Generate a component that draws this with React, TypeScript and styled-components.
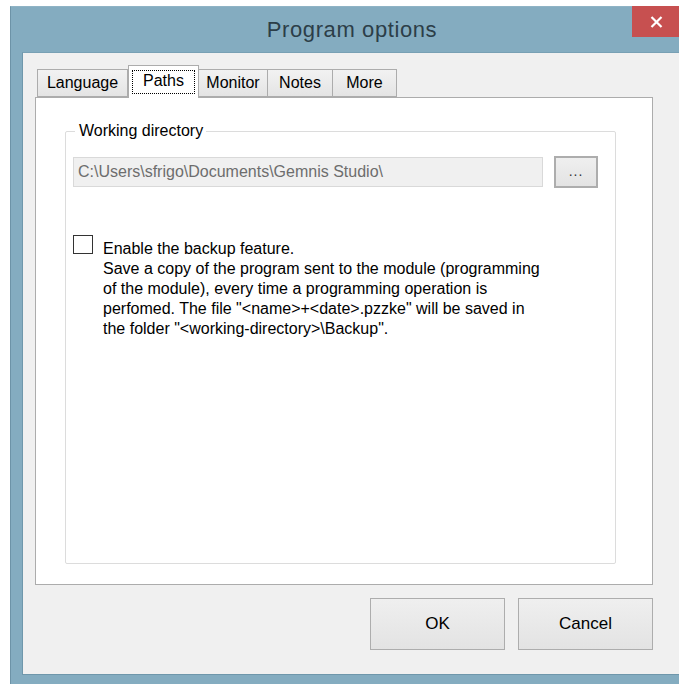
import React from 'react';
import styled, { createGlobalStyle } from 'styled-components';

const GlobalStyle = createGlobalStyle`
  html, body {
    margin: 0;
    padding: 0;
    background: #ffffff;
    overflow: hidden;
  }
  body {
    font-family: 'Liberation Sans', Arial, sans-serif;
  }
`;

const Window = styled.div`
  margin: 6px 0 0 10px;
  width: 700px;
  height: 690px;
  background: #84acc0;
  border-left: 1px solid #6d93a7;
  border-top: 1px solid #8fb3c5;
  display: flex;
  flex-direction: column;
`;

const TitleBar = styled.div`
  height: 45px;
  display: flex;
  align-items: flex-start;
  position: relative;
`;

const Title = styled.div`
  flex: 1;
  text-align: center;
  padding-top: 10px;
  padding-right: 18px;
  font-size: 22px;
  color: #2c3e48;
  letter-spacing: 0.6px;
`;

const CloseButton = styled.div`
  position: absolute;
  top: -1px;
  left: 621px;
  width: 60px;
  height: 31px;
  background: #c75050;
  display: flex;
  align-items: center;
  justify-content: center;
  padding-right: 12px;
  box-sizing: border-box;
`;

const Client = styled.div`
  margin-left: 11px;
  height: 623px;
  background: #f0f0f0;
  border-top: 1px solid #78a0b4;
  border-left: 1px solid #6f97ab;
  border-bottom: 1px solid #6f97ab;
  padding: 12px 0 0 12px;
  box-sizing: border-box;
  display: flex;
  flex-direction: column;
`;

const TabControl = styled.div`
  width: 618px;
  display: flex;
  flex-direction: column;
`;

const TabStrip = styled.div`
  display: flex;
  align-items: flex-end;
  height: 32px;
  padding-left: 2px;
  position: relative;
  z-index: 1;
`;

const Tab = styled.div<{ $active?: boolean; $width: number }>`
  box-sizing: border-box;
  width: ${p => p.$width}px;
  height: ${p => (p.$active ? '33px' : '28px')};
  margin-bottom: ${p => (p.$active ? '-1px' : '0')};
  padding-top: ${p => (p.$active ? '4px' : '4px')};
  border: 1px solid #acacac;
  border-bottom: ${p => (p.$active ? 'none' : '1px solid #acacac')};
  border-left: ${p => (p.$active ? '1px solid #acacac' : 'none')};
  background: ${p =>
    p.$active ? '#ffffff' : 'linear-gradient(#f2f2f2, #e4e4e4)'};
  font-size: 16px;
  color: #000;
  text-align: center;
  white-space: nowrap;
  position: relative;
  z-index: ${p => (p.$active ? 2 : 1)};

  &:first-child {
    border-left: 1px solid #acacac;
  }
`;

const FocusLabel = styled.span`
  display: block;
  margin: 0 3px;
  height: 24px;
  box-sizing: border-box;
  padding-top: 1px;
  border: 1px dotted #000;
`;

const TabPage = styled.div`
  height: 488px;
  background: #ffffff;
  border: 1px solid #acacac;
  box-sizing: border-box;
  padding: 24px 36px 20px 29px;
  display: flex;
`;

const GroupBox = styled.fieldset`
  flex: 1;
  margin: 0;
  border: 1px solid #dcdcdc;
  border-radius: 2px;
  padding: 16px 0 0 7px;
  display: flex;
  flex-direction: column;
`;

const Legend = styled.legend`
  margin-left: 2px;
  padding: 0 3px 0 4px;
  font-size: 16px;
  color: #000;
  line-height: 18px;
`;

const PathRow = styled.div`
  display: flex;
  align-items: center;
  gap: 11px;
`;

const PathField = styled.div`
  width: 470px;
  height: 30px;
  box-sizing: border-box;
  background: #f0f0f0;
  border: 1px solid #d9d9d9;
  padding: 5px 0 0 4px;
  font-size: 16px;
  color: #6d6d6d;
  white-space: nowrap;
  overflow: hidden;
`;

const BrowseButton = styled.div`
  width: 44px;
  height: 32px;
  box-sizing: border-box;
  border: 2px solid #adadad;
  background: linear-gradient(#efefef, #e3e3e3);
  display: flex;
  align-items: flex-end;
  justify-content: center;
  padding-bottom: 7px;
  font-size: 14px;
  color: #333;
  letter-spacing: 1px;
`;

const OptionRow = styled.div`
  display: flex;
  align-items: flex-start;
  gap: 10px;
  margin-top: 47px;
`;

const CheckBox = styled.div`
  width: 20px;
  height: 19px;
  box-sizing: border-box;
  border: 1px solid #333333;
  background: #ffffff;
  flex-shrink: 0;
`;

const OptionText = styled.div`
  font-size: 16px;
  line-height: 20px;
  color: #000;
  margin-top: 4px;
`;

const ButtonBar = styled.div`
  width: 618px;
  display: flex;
  justify-content: flex-end;
  gap: 13px;
  margin-top: 13px;
`;

const DialogButton = styled.div`
  width: 135px;
  height: 52px;
  box-sizing: border-box;
  border: 1px solid #adadad;
  background: linear-gradient(#efefef, #e3e3e3);
  display: flex;
  align-items: center;
  justify-content: center;
  font-size: 17px;
  color: #000;
`;

const tabs = [
  { label: 'Language', width: 91 },
  { label: 'Paths', width: 71 },
  { label: 'Monitor', width: 69 },
  { label: 'Notes', width: 65 },
  { label: 'More', width: 64 },
];

export default function App() {
  return (
    <>
      <GlobalStyle />
      <Window>
        <TitleBar>
          <Title>Program options</Title>
          <CloseButton>
            <svg width="13" height="12" viewBox="0 0 13 12">
              <path d="M1.5 1 L11.5 11 M11.5 1 L1.5 11" stroke="#ffffff" strokeWidth="2.2" />
            </svg>
          </CloseButton>
        </TitleBar>
        <Client>
          <TabControl>
            <TabStrip>
              {tabs.map(t => {
                const active = t.label === 'Paths';
                return (
                  <Tab key={t.label} $active={active} $width={t.width}>
                    {active ? <FocusLabel>{t.label}</FocusLabel> : t.label}
                  </Tab>
                );
              })}
            </TabStrip>
            <TabPage>
              <GroupBox>
                <Legend>Working directory</Legend>
                <PathRow>
                  <PathField>C:\Users\sfrigo\Documents\Gemnis Studio\</PathField>
                  <BrowseButton>...</BrowseButton>
                </PathRow>
                <OptionRow>
                  <CheckBox />
                  <OptionText>
                    Enable the backup feature.
                    <br />
                    Save a copy of the program sent to the module (programming
                    <br />
                    of the module), every time a programming operation is
                    <br />
                    perfomed. The file "&lt;name&gt;+&lt;date&gt;.pzzke" will be saved in
                    <br />
                    the folder "&lt;working-directory&gt;\Backup".
                  </OptionText>
                </OptionRow>
              </GroupBox>
            </TabPage>
          </TabControl>
          <ButtonBar>
            <DialogButton>OK</DialogButton>
            <DialogButton>Cancel</DialogButton>
          </ButtonBar>
        </Client>
      </Window>
    </>
  );
}
